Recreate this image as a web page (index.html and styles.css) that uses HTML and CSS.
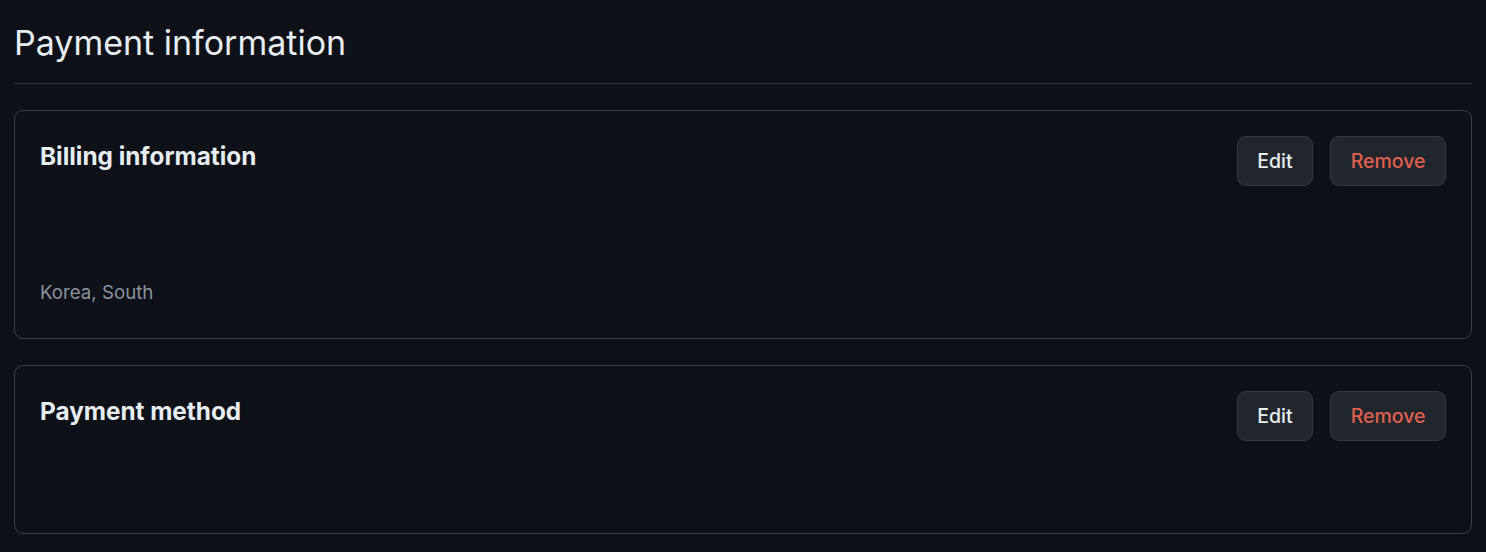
FILE: index.html
```html
<!DOCTYPE html>
<html lang="en">
<head>
  <meta charset="UTF-8" />
  <meta name="viewport" content="width=device-width,initial-scale=1.0" />
  <title>Payment information</title>
  <link rel="stylesheet" href="styles.css">
</head>
<body>

  <main class="page">
    <h2 class="page-title">Payment information</h2>

    <section class="box">
      <div class="box-head">
        <h3>Billing information</h3>
        <div class="actions">
          <button class="btn">Edit</button>
          <button class="btn btn-danger">Remove</button>
        </div>
      </div>
      <div class="box-body">
        <div class="line"></div>
        <div class="line"></div>
        <div class="line"></div>
        <div class="line muted">Korea, South</div>
      </div>
    </section>

    <section class="box">
      <div class="box-head">
        <h3>Payment method</h3>
        <div class="actions">
          <button class="btn">Edit</button>
          <button class="btn btn-danger">Remove</button>
        </div>
      </div>
      <div class="box-body">
        <div class="line"></div>
        <div class="line"></div>
      </div>
    </section>
  </main>

</body>
</html>
```

FILE: styles.css
```css
* { margin: 0; padding: 0; box-sizing: border-box; }
body {
  font-family: Inter, "Noto Sans", sans-serif;
  background: #0e1117;
  color: #e6edf3;
}
.page { padding: 0 14px; }
.page-title {
  font-size: 34px;
  font-weight: 400;
  line-height: 48px;
  padding-top: 19px;
  padding-bottom: 16px;
  border-bottom: 1px solid #30363d;
  margin-bottom: 26px;
}
.box {
  border: 1px solid #3b4048;
  border-radius: 9px;
  padding: 25px 25px 30px;
  margin-bottom: 26px;
}
.box-head {
  display: flex;
  justify-content: space-between;
  align-items: flex-start;
  height: 52px;
}
.box-head h3 {
  font-size: 24.3px;
  font-weight: 700;
  line-height: 40px;
}
.actions { display: flex; gap: 17px; }
.btn {
  font-family: inherit;
  font-size: 19.5px;
  font-weight: 500;
  color: #e6edf3;
  background: #21262d;
  border: 1px solid #363b42;
  border-radius: 9px;
  height: 50px;
  padding: 0 19.5px;
}
.btn-danger { color: #e0604f; }
.line { height: 30px; line-height: 30px; }
.muted { color: #8b949e; font-size: 18.7px; }
```
